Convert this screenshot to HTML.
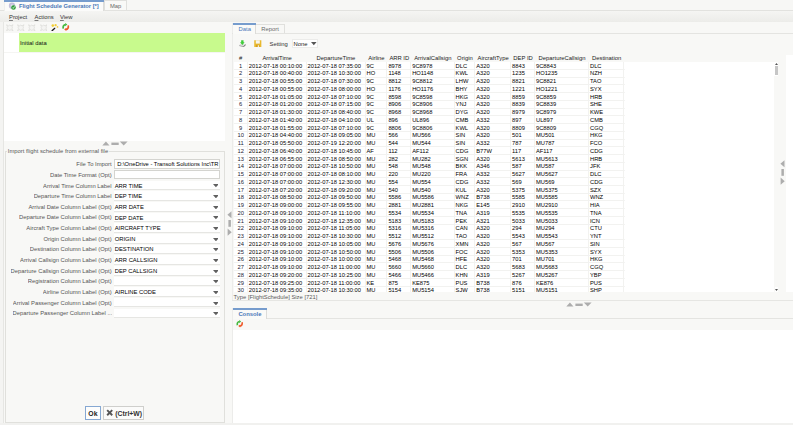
<!DOCTYPE html>
<html><head><meta charset="utf-8"><title>Flight Schedule Generator</title><style>
html,body{margin:0;padding:0}
body{width:793px;height:425px;overflow:hidden;background:#f8f8f6;font-family:"Liberation Sans",Arial,sans-serif;font-size:5.85px;color:#222;position:relative}
div,span{box-sizing:border-box}
.a{position:absolute}
.t{position:absolute;white-space:nowrap;line-height:8px;height:8px}
.b{font-weight:bold}
.blue{color:#4a78b8}
.gray{color:#5a5a5a}
.hl{position:absolute;height:1px;background:#e2e2df}
.vl{position:absolute;width:1px;background:#e2e2df}
.tri{position:absolute;width:0;height:0}
.lab{position:absolute;right:681.4px;white-space:nowrap;line-height:8px;height:8px;color:#555;text-align:right;overflow:hidden;text-overflow:ellipsis;max-width:106px}
.inp{position:absolute;left:114.3px;width:105.5px;background:#fff;border:1px solid #d4d4d0;overflow:hidden}
.cmb{position:absolute;left:114.3px;width:105.5px;height:9.5px;background:#fff;border-bottom:1px solid #e6e6e3;overflow:hidden}
.cmb span{position:absolute;left:0.4px;top:0.8px;line-height:8px;white-space:nowrap;color:#000}
.cmb svg{position:absolute;left:98.3px;top:3.7px}
#tbl{position:absolute;left:233.5px;top:61.7px;width:540.5px;height:230.3px;background:#fff repeating-linear-gradient(to bottom,transparent 0,transparent 6.75px,#f2f2f0 6.75px,#f2f2f0 7.75px) no-repeat;background-size:390.8px 100%;overflow:hidden}
.gv{position:absolute;top:0;width:1px;height:100%;background:#f2f2f0}
.r{position:absolute;left:0;height:7.75px;white-space:nowrap}
.c{position:absolute;top:0;height:7.75px;line-height:9.2px;padding-left:1px;font-size:5.76px;overflow:hidden;color:#000}

.c0{text-align:center;padding-left:0;color:#223}
.h{position:absolute;top:54.3px;height:8px;line-height:8px;text-align:center;color:#222;white-space:nowrap}
u{text-decoration:underline;text-decoration-thickness:0.55px;text-underline-offset:0.9px;text-decoration-color:#7a7a7a}
</style></head><body>
<div class="a" style="left:0;top:0;width:793px;height:10.6px;background:#f7f7f5"></div>
<div class="hl" style="left:0;top:10.2px;width:793px;background:#e2e2df"></div>
<div class="a" style="left:3.5px;top:0;width:100.8px;height:11.2px;background:#fbfbfa;border-left:1px solid #efefec;border-right:1px solid #dcdcd9"></div>
<div class="a" style="left:3.5px;top:0;width:100.8px;height:1.6px;background:#769ccd"></div>
<svg class="a" style="left:8.3px;top:1.5px" width="8.5" height="8.5" viewBox="0 0 17 17"><circle cx="8" cy="7.500" r="6.300" fill="#c4c0da"/><circle cx="8" cy="7.500" r="2.400" fill="#e9e7f2"/><circle cx="11" cy="11" r="4.6" fill="#2f9e3a"/><path d="M8.800 11.200l1.600 1.600 3-4" stroke="#fff" stroke-width="1.500" fill="none"/></svg>
<div class="t b blue" style="left:19px;top:2px;font-size:5.78px">Flight Schedule Generator [*]</div>
<div class="a" style="left:104.4px;top:0;width:22.2px;height:10.4px;background:#f9f9f7;border:1px solid #e0e0dd;border-bottom:none"></div>
<div class="t" style="left:110px;top:2px;color:#6a6a6a">Map</div>
<div class="a" style="left:0;top:11.2px;width:793px;height:11px;background:linear-gradient(#f5f5f3,#ecece9)"></div>
<div class="t" style="left:9px;top:13.3px;color:#333"><u>P</u>roject</div>
<div class="t" style="left:34.5px;top:13.3px;color:#333"><u>A</u>ctions</div>
<div class="t" style="left:60px;top:13.3px;color:#333"><u>V</u>iew</div>
<svg class="a" style="left:6px;top:23.6px" width="7.5" height="7.5" viewBox="0 0 15 15"><path d="M1 1.500L5 3.600 7.500 2.200 10 3.600 14 1.500 12 5.600 13 7.500 12 9.400 14 13.500 10 11.400 7.500 12.800 5 11.400 1 13.500 3 9.400 2 7.500 3 5.600z" fill="#f4f4f2" stroke="#d9d9d6" stroke-width="1.300"/></svg>
<svg class="a" style="left:17px;top:23.6px" width="7.5" height="7.5" viewBox="0 0 15 15"><path d="M1 1.500L5 3.600 7.500 2.200 10 3.600 14 1.500 12 5.600 13 7.500 12 9.400 14 13.500 10 11.400 7.500 12.800 5 11.400 1 13.500 3 9.400 2 7.500 3 5.600z" fill="#f4f4f2" stroke="#d9d9d6" stroke-width="1.300"/></svg>
<svg class="a" style="left:28px;top:23.6px" width="7.5" height="7.5" viewBox="0 0 15 15"><path d="M1 1.500L5 3.600 7.500 2.200 10 3.600 14 1.500 12 5.600 13 7.500 12 9.400 14 13.500 10 11.400 7.500 12.800 5 11.400 1 13.500 3 9.400 2 7.500 3 5.600z" fill="#f4f4f2" stroke="#d9d9d6" stroke-width="1.300"/></svg>
<svg class="a" style="left:39.5px;top:23.6px" width="7.5" height="7.5" viewBox="0 0 15 15"><path d="M1 1.500L5 3.600 7.500 2.200 10 3.600 14 1.500 12 5.600 13 7.500 12 9.400 14 13.500 10 11.400 7.500 12.800 5 11.400 1 13.500 3 9.400 2 7.500 3 5.600z" fill="#f4f4f2" stroke="#d9d9d6" stroke-width="1.300"/></svg>
<svg class="a" style="left:51px;top:23.6px" width="7.5" height="7.5" viewBox="0 0 15 15"><path d="M0.600 13.200L7.200 7l1.800 1.900L2.400 15z" fill="#1a1a1a"/><path d="M7.200 7l1.800-1.600 1.700 1.800L9 8.900z" fill="#e8e8f0"/><circle cx="3.600" cy="3.200" r="2.600" fill="#f3cf3a"/><circle cx="9.200" cy="2.400" r="2.300" fill="#f3cf3a"/><circle cx="13" cy="5.800" r="1.700" fill="#f0c94a"/></svg>
<svg class="a" style="left:62px;top:23.4px" width="7.5" height="8" viewBox="0 0 15 16"><path d="M2.600 11.200C1.400 6.500 3.600 3.200 7.200 3.100" stroke="#45b83f" stroke-width="3.400" fill="none"/><path d="M6.400 0v6.600L10.600 3.200z" fill="#45b83f"/><path d="M12.400 4.800c1.200 4.700-1 8-4.600 8.100" stroke="#ee5a2a" stroke-width="3.400" fill="none"/><path d="M8.600 16V9.400L4.400 12.800z" fill="#ee5a2a"/></svg>
<div class="vl" style="left:3px;top:22.4px;height:402.6px;width:0.8px;background:#e6e6e3"></div>
<div class="a" style="left:0;top:22.4px;width:3px;height:402.6px;background:#f4f4f2"></div>
<div class="a" style="left:3.8px;top:33px;width:221.6px;height:107.6px;background:#fff"></div>
<div class="a" style="left:19px;top:33px;width:206.4px;height:19px;background:#c8fa8d"></div>
<div class="hl" style="left:3.8px;top:52px;width:221.6px;background:#f5f5f3"></div>
<div class="t" style="left:20px;top:38.6px;color:#111">Initial data</div>
<svg class="a" style="left:101.50px;top:141.30px" width="26" height="5" viewBox="0 0 26 5"><path d="M0.300 4.600h7.200L3.900 0.400z" fill="#adadad"/><path d="M9.400 1.600h7.300v2.400H9.400z" fill="#adadad"/><path d="M17.800 0.400h7.800L21.700 4.600z" fill="#adadad"/></svg>
<div class="a" style="left:5.4px;top:151.2px;width:219.6px;height:271.6px;border:1px solid #e0e0dc"></div>
<div class="t gray" style="left:7px;top:147.4px;background:#f8f8f6;padding:0 0.8px">Import flight schedule from external file</div>
<div class="lab" style="top:160px">File To Import</div>
<div class="inp" style="top:159.3px;height:9.4px"><span class="t" style="left:1.9px;top:0px;color:#000;font-size:5.76px">D:\OneDrive - Transoft Solutions Inc\TR</span></div>
<div class="lab" style="top:170.5px">Date Time Format (Opt)</div>
<div class="inp" style="top:170px;height:8.9px"></div>
<div class="lab" style="top:181.50px">Arrival Time Column Label</div>
<div class="cmb" style="top:180.80px"><span>ARR TIME</span><svg width="5.8" height="3.3" viewBox="0 0 58 33"><path d="M0 0h58L29 33z" fill="#606060"/></svg></div>
<div class="lab" style="top:192.15px">Departure Time Column Label</div>
<div class="cmb" style="top:191.45px"><span>DEP TIME</span><svg width="5.8" height="3.3" viewBox="0 0 58 33"><path d="M0 0h58L29 33z" fill="#606060"/></svg></div>
<div class="lab" style="top:202.80px">Arrival Date Column Label (Opt)</div>
<div class="cmb" style="top:202.10px"><span>ARR DATE</span><svg width="5.8" height="3.3" viewBox="0 0 58 33"><path d="M0 0h58L29 33z" fill="#606060"/></svg></div>
<div class="lab" style="top:213.45px">Departure Date Column Label (Opt)</div>
<div class="cmb" style="top:212.75px"><span>DEP DATE</span><svg width="5.8" height="3.3" viewBox="0 0 58 33"><path d="M0 0h58L29 33z" fill="#606060"/></svg></div>
<div class="lab" style="top:224.10px">Aircraft Type Column Label (Opt)</div>
<div class="cmb" style="top:223.40px"><span>AIRCRAFT TYPE</span><svg width="5.8" height="3.3" viewBox="0 0 58 33"><path d="M0 0h58L29 33z" fill="#606060"/></svg></div>
<div class="lab" style="top:234.75px">Origin Column Label (Opt)</div>
<div class="cmb" style="top:234.05px"><span>ORIGIN</span><svg width="5.8" height="3.3" viewBox="0 0 58 33"><path d="M0 0h58L29 33z" fill="#606060"/></svg></div>
<div class="lab" style="top:245.40px">Destination Column Label (Opt)</div>
<div class="cmb" style="top:244.70px"><span>DESTINATION</span><svg width="5.8" height="3.3" viewBox="0 0 58 33"><path d="M0 0h58L29 33z" fill="#606060"/></svg></div>
<div class="lab" style="top:256.05px">Arrival Callsign Column Label (Opt)</div>
<div class="cmb" style="top:255.35px"><span>ARR CALLSIGN</span><svg width="5.8" height="3.3" viewBox="0 0 58 33"><path d="M0 0h58L29 33z" fill="#606060"/></svg></div>
<div class="lab" style="top:266.70px">Departure Callsign Column Label (Opt)</div>
<div class="cmb" style="top:266.00px"><span>DEP CALLSIGN</span><svg width="5.8" height="3.3" viewBox="0 0 58 33"><path d="M0 0h58L29 33z" fill="#606060"/></svg></div>
<div class="lab" style="top:277.35px">Registration Column Label (Opt)</div>
<div class="cmb" style="top:276.65px"><span></span><svg width="5.8" height="3.3" viewBox="0 0 58 33"><path d="M0 0h58L29 33z" fill="#606060"/></svg></div>
<div class="lab" style="top:288.00px">Airline Column Label (Opt)</div>
<div class="cmb" style="top:287.30px"><span>AIRLINE CODE</span><svg width="5.8" height="3.3" viewBox="0 0 58 33"><path d="M0 0h58L29 33z" fill="#606060"/></svg></div>
<div class="lab" style="top:298.65px">Arrival Passenger Column Label (Opt)</div>
<div class="cmb" style="top:297.95px"><span></span><svg width="5.8" height="3.3" viewBox="0 0 58 33"><path d="M0 0h58L29 33z" fill="#606060"/></svg></div>
<div class="lab" style="top:309.30px;right:auto;left:12.6px;text-align:left">Departure Passenger Column Label ...</div>
<div class="cmb" style="top:308.60px"><span></span><svg width="5.8" height="3.3" viewBox="0 0 58 33"><path d="M0 0h58L29 33z" fill="#606060"/></svg></div>
<div class="a b" style="left:85px;top:405.8px;width:15.8px;height:14px;border:1px solid #86a8d2;background:#fdfdfc;font-size:6.85px;line-height:14px;text-align:center;color:#222">Ok</div>
<div class="a b" style="left:103.1px;top:405.8px;width:41.4px;height:14px;border:1px solid #cfcfcc;background:#fbfbfa;font-size:6.85px;line-height:14px;color:#333"><svg class="a" style="left:1.6px;top:2.2px" width="7.4" height="7.4" viewBox="0 0 14 14"><path d="M2.200 2.200l9.600 9.600M11.800 2.200L2.200 11.800" stroke="#555" stroke-width="3.600"/></svg><span class="a" style="left:11.2px;top:0">(Ctrl+W)</span></div>
<svg class="a" style="left:226.60px;top:210.90px" width="5" height="25" viewBox="0 0 5 25"><path d="M4.500 0.300v6.900L0.400 3.750z" fill="#adadad"/><path d="M1.400 9h2.500v6.800H1.400z" fill="#adadad"/><path d="M0.600 17.600v7.100L4.700 21.150z" fill="#adadad"/></svg>
<div class="vl" style="left:232.4px;top:23px;height:277.5px;background:#ececea"></div>
<div class="hl" style="left:232.4px;top:32.5px;width:561px;background:#e4e4e1"></div>
<div class="a" style="left:232.8px;top:23px;width:23.2px;height:10.6px;background:#fafaf8;border-right:1px solid #dcdcd9"></div>
<div class="a" style="left:232.8px;top:23px;width:23.2px;height:1.7px;background:#769ccd"></div>
<div class="t blue" style="left:238.6px;top:25px">Data</div>
<div class="a" style="left:256px;top:24px;width:28.6px;height:8.6px;border:1px solid #e0e0dd;border-left:none;border-bottom:none"></div>
<div class="t" style="left:261.3px;top:25px;color:#6a6a6a">Report</div>
<svg class="a" style="left:238.8px;top:39.6px" width="7" height="7.4" viewBox="0 0 14 15"><path d="M0.400 10L4.800 6.200l8.800 2.200L9 12.600z" fill="#dcdcdc"/><path d="M0.400 10L9 12.600v2.200L0.400 12z" fill="#a8a8a8"/><path d="M9 12.600l4.600-4.200v2L9 14.800z" fill="#4a4a4a"/><path d="M4.300 0.300h4.800v4.400h2.200L6.700 10.200 2 4.700h2.300z" fill="#3fcc3a"/></svg>
<svg class="a" style="left:254px;top:39.6px" width="7.6" height="7.6" viewBox="0 0 15 15"><path d="M0.500 0.500h14v14h-14z" fill="#e9b92e"/><path d="M3.500 0.500h8v6.600h-8z" fill="#f7f5ee"/><path d="M4 9.500h7v5H4z" fill="#d49f1e"/><path d="M7.500 10.500h2.200v4H7.500z" fill="#f7f5ee"/></svg>
<div class="t" style="left:269.6px;top:40px;color:#333">Setting</div>
<div class="a" style="left:292px;top:39px;width:26.4px;height:9.3px;background:#fff;border:1px solid #ececea"></div>
<div class="t" style="left:293.6px;top:40px;color:#222">None</div>
<svg class="a" style="left:311.2px;top:42.4px" width="5.6" height="3.2" viewBox="0 0 56 32"><path d="M0 0h56L28 32z" fill="#555"/></svg>
<div class="h" style="left:233.5px;width:14.3px">#</div>
<div class="h" style="left:247.8px;width:58.7px">ArrivalTime</div>
<div class="h" style="left:306.5px;width:59.0px">DepartureTime</div>
<div class="h" style="left:365.5px;width:21.9px">Airline</div>
<div class="h" style="left:387.4px;width:23.8px">ARR ID</div>
<div class="h" style="left:411.2px;width:43.4px">ArrivalCallsign</div>
<div class="h" style="left:454.6px;width:20.6px">Origin</div>
<div class="h" style="left:475.2px;width:35.9px">AircraftType</div>
<div class="h" style="left:511.1px;width:23.9px">DEP ID</div>
<div class="h" style="left:535.0px;width:54.0px">DepartureCallsign</div>
<div class="h" style="left:589.0px;width:35.3px">Destination</div>
<div id="tbl">
<div class="gv" style="left:13.3px"></div>
<div class="gv" style="left:72.0px"></div>
<div class="gv" style="left:131.0px"></div>
<div class="gv" style="left:152.9px"></div>
<div class="gv" style="left:176.7px"></div>
<div class="gv" style="left:220.1px"></div>
<div class="gv" style="left:240.7px"></div>
<div class="gv" style="left:276.6px"></div>
<div class="gv" style="left:300.5px"></div>
<div class="gv" style="left:354.5px"></div>
<div class="gv" style="left:389.8px"></div>
<div class="r" style="top:0.00px"><div class="c c0" style="left:0.0px;width:14.3px">1</div><div class="c" style="left:14.3px;width:58.7px">2012-07-18 00:10:00</div><div class="c" style="left:73.0px;width:59.0px">2012-07-18 07:35:00</div><div class="c" style="left:132.0px;width:21.9px">9C</div><div class="c" style="left:153.9px;width:23.8px">8978</div><div class="c" style="left:177.7px;width:43.4px">9C8978</div><div class="c" style="left:221.1px;width:20.6px">DLC</div><div class="c" style="left:241.7px;width:35.9px">A320</div><div class="c" style="left:277.6px;width:23.9px">8843</div><div class="c" style="left:301.5px;width:54.0px">9C8843</div><div class="c" style="left:355.5px;width:35.3px">DLC</div></div>
<div class="r" style="top:7.75px"><div class="c c0" style="left:0.0px;width:14.3px">2</div><div class="c" style="left:14.3px;width:58.7px">2012-07-18 00:40:00</div><div class="c" style="left:73.0px;width:59.0px">2012-07-18 10:30:00</div><div class="c" style="left:132.0px;width:21.9px">HO</div><div class="c" style="left:153.9px;width:23.8px">1148</div><div class="c" style="left:177.7px;width:43.4px">HO1148</div><div class="c" style="left:221.1px;width:20.6px">KWL</div><div class="c" style="left:241.7px;width:35.9px">A320</div><div class="c" style="left:277.6px;width:23.9px">1235</div><div class="c" style="left:301.5px;width:54.0px">HO1235</div><div class="c" style="left:355.5px;width:35.3px">NZH</div></div>
<div class="r" style="top:15.50px"><div class="c c0" style="left:0.0px;width:14.3px">3</div><div class="c" style="left:14.3px;width:58.7px">2012-07-18 00:55:00</div><div class="c" style="left:73.0px;width:59.0px">2012-07-18 07:30:00</div><div class="c" style="left:132.0px;width:21.9px">9C</div><div class="c" style="left:153.9px;width:23.8px">8812</div><div class="c" style="left:177.7px;width:43.4px">9C8812</div><div class="c" style="left:221.1px;width:20.6px">LHW</div><div class="c" style="left:241.7px;width:35.9px">A320</div><div class="c" style="left:277.6px;width:23.9px">8821</div><div class="c" style="left:301.5px;width:54.0px">9C8821</div><div class="c" style="left:355.5px;width:35.3px">TAO</div></div>
<div class="r" style="top:23.25px"><div class="c c0" style="left:0.0px;width:14.3px">4</div><div class="c" style="left:14.3px;width:58.7px">2012-07-18 00:55:00</div><div class="c" style="left:73.0px;width:59.0px">2012-07-18 08:00:00</div><div class="c" style="left:132.0px;width:21.9px">HO</div><div class="c" style="left:153.9px;width:23.8px">1176</div><div class="c" style="left:177.7px;width:43.4px">HO1176</div><div class="c" style="left:221.1px;width:20.6px">BHY</div><div class="c" style="left:241.7px;width:35.9px">A320</div><div class="c" style="left:277.6px;width:23.9px">1221</div><div class="c" style="left:301.5px;width:54.0px">HO1221</div><div class="c" style="left:355.5px;width:35.3px">SYX</div></div>
<div class="r" style="top:31.00px"><div class="c c0" style="left:0.0px;width:14.3px">5</div><div class="c" style="left:14.3px;width:58.7px">2012-07-18 01:05:00</div><div class="c" style="left:73.0px;width:59.0px">2012-07-18 07:10:00</div><div class="c" style="left:132.0px;width:21.9px">9C</div><div class="c" style="left:153.9px;width:23.8px">8598</div><div class="c" style="left:177.7px;width:43.4px">9C8598</div><div class="c" style="left:221.1px;width:20.6px">HKG</div><div class="c" style="left:241.7px;width:35.9px">A320</div><div class="c" style="left:277.6px;width:23.9px">8859</div><div class="c" style="left:301.5px;width:54.0px">9C8859</div><div class="c" style="left:355.5px;width:35.3px">HRB</div></div>
<div class="r" style="top:38.75px"><div class="c c0" style="left:0.0px;width:14.3px">6</div><div class="c" style="left:14.3px;width:58.7px">2012-07-18 01:20:00</div><div class="c" style="left:73.0px;width:59.0px">2012-07-18 07:15:00</div><div class="c" style="left:132.0px;width:21.9px">9C</div><div class="c" style="left:153.9px;width:23.8px">8906</div><div class="c" style="left:177.7px;width:43.4px">9C8906</div><div class="c" style="left:221.1px;width:20.6px">YNJ</div><div class="c" style="left:241.7px;width:35.9px">A320</div><div class="c" style="left:277.6px;width:23.9px">8839</div><div class="c" style="left:301.5px;width:54.0px">9C8839</div><div class="c" style="left:355.5px;width:35.3px">SHE</div></div>
<div class="r" style="top:46.50px"><div class="c c0" style="left:0.0px;width:14.3px">7</div><div class="c" style="left:14.3px;width:58.7px">2012-07-18 01:30:00</div><div class="c" style="left:73.0px;width:59.0px">2012-07-18 08:40:00</div><div class="c" style="left:132.0px;width:21.9px">9C</div><div class="c" style="left:153.9px;width:23.8px">8968</div><div class="c" style="left:177.7px;width:43.4px">9C8968</div><div class="c" style="left:221.1px;width:20.6px">DYG</div><div class="c" style="left:241.7px;width:35.9px">A320</div><div class="c" style="left:277.6px;width:23.9px">8979</div><div class="c" style="left:301.5px;width:54.0px">9C8979</div><div class="c" style="left:355.5px;width:35.3px">KWE</div></div>
<div class="r" style="top:54.25px"><div class="c c0" style="left:0.0px;width:14.3px">8</div><div class="c" style="left:14.3px;width:58.7px">2012-07-18 01:40:00</div><div class="c" style="left:73.0px;width:59.0px">2012-07-18 04:10:00</div><div class="c" style="left:132.0px;width:21.9px">UL</div><div class="c" style="left:153.9px;width:23.8px">896</div><div class="c" style="left:177.7px;width:43.4px">UL896</div><div class="c" style="left:221.1px;width:20.6px">CMB</div><div class="c" style="left:241.7px;width:35.9px">A332</div><div class="c" style="left:277.6px;width:23.9px">897</div><div class="c" style="left:301.5px;width:54.0px">UL897</div><div class="c" style="left:355.5px;width:35.3px">CMB</div></div>
<div class="r" style="top:62.00px"><div class="c c0" style="left:0.0px;width:14.3px">9</div><div class="c" style="left:14.3px;width:58.7px">2012-07-18 01:55:00</div><div class="c" style="left:73.0px;width:59.0px">2012-07-18 07:10:00</div><div class="c" style="left:132.0px;width:21.9px">9C</div><div class="c" style="left:153.9px;width:23.8px">8806</div><div class="c" style="left:177.7px;width:43.4px">9C8806</div><div class="c" style="left:221.1px;width:20.6px">KWL</div><div class="c" style="left:241.7px;width:35.9px">A320</div><div class="c" style="left:277.6px;width:23.9px">8809</div><div class="c" style="left:301.5px;width:54.0px">9C8809</div><div class="c" style="left:355.5px;width:35.3px">CGQ</div></div>
<div class="r" style="top:69.75px"><div class="c c0" style="left:0.0px;width:14.3px">10</div><div class="c" style="left:14.3px;width:58.7px">2012-07-18 04:40:00</div><div class="c" style="left:73.0px;width:59.0px">2012-07-18 09:05:00</div><div class="c" style="left:132.0px;width:21.9px">MU</div><div class="c" style="left:153.9px;width:23.8px">566</div><div class="c" style="left:177.7px;width:43.4px">MU566</div><div class="c" style="left:221.1px;width:20.6px">SIN</div><div class="c" style="left:241.7px;width:35.9px">A320</div><div class="c" style="left:277.6px;width:23.9px">501</div><div class="c" style="left:301.5px;width:54.0px">MU501</div><div class="c" style="left:355.5px;width:35.3px">HKG</div></div>
<div class="r" style="top:77.50px"><div class="c c0" style="left:0.0px;width:14.3px">11</div><div class="c" style="left:14.3px;width:58.7px">2012-07-18 05:50:00</div><div class="c" style="left:73.0px;width:59.0px">2012-07-19 12:20:00</div><div class="c" style="left:132.0px;width:21.9px">MU</div><div class="c" style="left:153.9px;width:23.8px">544</div><div class="c" style="left:177.7px;width:43.4px">MU544</div><div class="c" style="left:221.1px;width:20.6px">SIN</div><div class="c" style="left:241.7px;width:35.9px">A332</div><div class="c" style="left:277.6px;width:23.9px">787</div><div class="c" style="left:301.5px;width:54.0px">MU787</div><div class="c" style="left:355.5px;width:35.3px">FCO</div></div>
<div class="r" style="top:85.25px"><div class="c c0" style="left:0.0px;width:14.3px">12</div><div class="c" style="left:14.3px;width:58.7px">2012-07-18 06:40:00</div><div class="c" style="left:73.0px;width:59.0px">2012-07-18 10:45:00</div><div class="c" style="left:132.0px;width:21.9px">AF</div><div class="c" style="left:153.9px;width:23.8px">112</div><div class="c" style="left:177.7px;width:43.4px">AF112</div><div class="c" style="left:221.1px;width:20.6px">CDG</div><div class="c" style="left:241.7px;width:35.9px">B77W</div><div class="c" style="left:277.6px;width:23.9px">117</div><div class="c" style="left:301.5px;width:54.0px">AF117</div><div class="c" style="left:355.5px;width:35.3px">CDG</div></div>
<div class="r" style="top:93.00px"><div class="c c0" style="left:0.0px;width:14.3px">13</div><div class="c" style="left:14.3px;width:58.7px">2012-07-18 06:55:00</div><div class="c" style="left:73.0px;width:59.0px">2012-07-18 08:50:00</div><div class="c" style="left:132.0px;width:21.9px">MU</div><div class="c" style="left:153.9px;width:23.8px">282</div><div class="c" style="left:177.7px;width:43.4px">MU282</div><div class="c" style="left:221.1px;width:20.6px">SGN</div><div class="c" style="left:241.7px;width:35.9px">A320</div><div class="c" style="left:277.6px;width:23.9px">5613</div><div class="c" style="left:301.5px;width:54.0px">MU5613</div><div class="c" style="left:355.5px;width:35.3px">HRB</div></div>
<div class="r" style="top:100.75px"><div class="c c0" style="left:0.0px;width:14.3px">14</div><div class="c" style="left:14.3px;width:58.7px">2012-07-18 07:00:00</div><div class="c" style="left:73.0px;width:59.0px">2012-07-18 10:50:00</div><div class="c" style="left:132.0px;width:21.9px">MU</div><div class="c" style="left:153.9px;width:23.8px">548</div><div class="c" style="left:177.7px;width:43.4px">MU548</div><div class="c" style="left:221.1px;width:20.6px">BKK</div><div class="c" style="left:241.7px;width:35.9px">A346</div><div class="c" style="left:277.6px;width:23.9px">587</div><div class="c" style="left:301.5px;width:54.0px">MU587</div><div class="c" style="left:355.5px;width:35.3px">JFK</div></div>
<div class="r" style="top:108.50px"><div class="c c0" style="left:0.0px;width:14.3px">15</div><div class="c" style="left:14.3px;width:58.7px">2012-07-18 07:00:00</div><div class="c" style="left:73.0px;width:59.0px">2012-07-18 08:10:00</div><div class="c" style="left:132.0px;width:21.9px">MU</div><div class="c" style="left:153.9px;width:23.8px">220</div><div class="c" style="left:177.7px;width:43.4px">MU220</div><div class="c" style="left:221.1px;width:20.6px">FRA</div><div class="c" style="left:241.7px;width:35.9px">A332</div><div class="c" style="left:277.6px;width:23.9px">5627</div><div class="c" style="left:301.5px;width:54.0px">MU5627</div><div class="c" style="left:355.5px;width:35.3px">DLC</div></div>
<div class="r" style="top:116.25px"><div class="c c0" style="left:0.0px;width:14.3px">16</div><div class="c" style="left:14.3px;width:58.7px">2012-07-18 07:00:00</div><div class="c" style="left:73.0px;width:59.0px">2012-07-18 12:30:00</div><div class="c" style="left:132.0px;width:21.9px">MU</div><div class="c" style="left:153.9px;width:23.8px">554</div><div class="c" style="left:177.7px;width:43.4px">MU554</div><div class="c" style="left:221.1px;width:20.6px">CDG</div><div class="c" style="left:241.7px;width:35.9px">A332</div><div class="c" style="left:277.6px;width:23.9px">569</div><div class="c" style="left:301.5px;width:54.0px">MU569</div><div class="c" style="left:355.5px;width:35.3px">CDG</div></div>
<div class="r" style="top:124.00px"><div class="c c0" style="left:0.0px;width:14.3px">17</div><div class="c" style="left:14.3px;width:58.7px">2012-07-18 07:20:00</div><div class="c" style="left:73.0px;width:59.0px">2012-07-18 09:20:00</div><div class="c" style="left:132.0px;width:21.9px">MU</div><div class="c" style="left:153.9px;width:23.8px">540</div><div class="c" style="left:177.7px;width:43.4px">MU540</div><div class="c" style="left:221.1px;width:20.6px">KUL</div><div class="c" style="left:241.7px;width:35.9px">A320</div><div class="c" style="left:277.6px;width:23.9px">5375</div><div class="c" style="left:301.5px;width:54.0px">MU5375</div><div class="c" style="left:355.5px;width:35.3px">SZX</div></div>
<div class="r" style="top:131.75px"><div class="c c0" style="left:0.0px;width:14.3px">18</div><div class="c" style="left:14.3px;width:58.7px">2012-07-18 08:50:00</div><div class="c" style="left:73.0px;width:59.0px">2012-07-18 09:50:00</div><div class="c" style="left:132.0px;width:21.9px">MU</div><div class="c" style="left:153.9px;width:23.8px">5586</div><div class="c" style="left:177.7px;width:43.4px">MU5586</div><div class="c" style="left:221.1px;width:20.6px">WNZ</div><div class="c" style="left:241.7px;width:35.9px">B738</div><div class="c" style="left:277.6px;width:23.9px">5585</div><div class="c" style="left:301.5px;width:54.0px">MU5585</div><div class="c" style="left:355.5px;width:35.3px">WNZ</div></div>
<div class="r" style="top:139.50px"><div class="c c0" style="left:0.0px;width:14.3px">19</div><div class="c" style="left:14.3px;width:58.7px">2012-07-18 09:00:00</div><div class="c" style="left:73.0px;width:59.0px">2012-07-18 09:55:00</div><div class="c" style="left:132.0px;width:21.9px">MU</div><div class="c" style="left:153.9px;width:23.8px">2881</div><div class="c" style="left:177.7px;width:43.4px">MU2881</div><div class="c" style="left:221.1px;width:20.6px">NKG</div><div class="c" style="left:241.7px;width:35.9px">E145</div><div class="c" style="left:277.6px;width:23.9px">2910</div><div class="c" style="left:301.5px;width:54.0px">MU2910</div><div class="c" style="left:355.5px;width:35.3px">HIA</div></div>
<div class="r" style="top:147.25px"><div class="c c0" style="left:0.0px;width:14.3px">20</div><div class="c" style="left:14.3px;width:58.7px">2012-07-18 09:10:00</div><div class="c" style="left:73.0px;width:59.0px">2012-07-18 11:10:00</div><div class="c" style="left:132.0px;width:21.9px">MU</div><div class="c" style="left:153.9px;width:23.8px">5534</div><div class="c" style="left:177.7px;width:43.4px">MU5534</div><div class="c" style="left:221.1px;width:20.6px">TNA</div><div class="c" style="left:241.7px;width:35.9px">A319</div><div class="c" style="left:277.6px;width:23.9px">5535</div><div class="c" style="left:301.5px;width:54.0px">MU5535</div><div class="c" style="left:355.5px;width:35.3px">TNA</div></div>
<div class="r" style="top:155.00px"><div class="c c0" style="left:0.0px;width:14.3px">21</div><div class="c" style="left:14.3px;width:58.7px">2012-07-18 09:10:00</div><div class="c" style="left:73.0px;width:59.0px">2012-07-18 12:35:00</div><div class="c" style="left:132.0px;width:21.9px">MU</div><div class="c" style="left:153.9px;width:23.8px">5183</div><div class="c" style="left:177.7px;width:43.4px">MU5183</div><div class="c" style="left:221.1px;width:20.6px">PEK</div><div class="c" style="left:241.7px;width:35.9px">A321</div><div class="c" style="left:277.6px;width:23.9px">5033</div><div class="c" style="left:301.5px;width:54.0px">MU5033</div><div class="c" style="left:355.5px;width:35.3px">ICN</div></div>
<div class="r" style="top:162.75px"><div class="c c0" style="left:0.0px;width:14.3px">22</div><div class="c" style="left:14.3px;width:58.7px">2012-07-18 09:10:00</div><div class="c" style="left:73.0px;width:59.0px">2012-07-18 11:05:00</div><div class="c" style="left:132.0px;width:21.9px">MU</div><div class="c" style="left:153.9px;width:23.8px">5316</div><div class="c" style="left:177.7px;width:43.4px">MU5316</div><div class="c" style="left:221.1px;width:20.6px">CAN</div><div class="c" style="left:241.7px;width:35.9px">A320</div><div class="c" style="left:277.6px;width:23.9px">294</div><div class="c" style="left:301.5px;width:54.0px">MU294</div><div class="c" style="left:355.5px;width:35.3px">CTU</div></div>
<div class="r" style="top:170.50px"><div class="c c0" style="left:0.0px;width:14.3px">23</div><div class="c" style="left:14.3px;width:58.7px">2012-07-18 09:10:00</div><div class="c" style="left:73.0px;width:59.0px">2012-07-18 10:30:00</div><div class="c" style="left:132.0px;width:21.9px">MU</div><div class="c" style="left:153.9px;width:23.8px">5512</div><div class="c" style="left:177.7px;width:43.4px">MU5512</div><div class="c" style="left:221.1px;width:20.6px">TAO</div><div class="c" style="left:241.7px;width:35.9px">A320</div><div class="c" style="left:277.6px;width:23.9px">5543</div><div class="c" style="left:301.5px;width:54.0px">MU5543</div><div class="c" style="left:355.5px;width:35.3px">YNT</div></div>
<div class="r" style="top:178.25px"><div class="c c0" style="left:0.0px;width:14.3px">24</div><div class="c" style="left:14.3px;width:58.7px">2012-07-18 09:10:00</div><div class="c" style="left:73.0px;width:59.0px">2012-07-18 10:05:00</div><div class="c" style="left:132.0px;width:21.9px">MU</div><div class="c" style="left:153.9px;width:23.8px">5676</div><div class="c" style="left:177.7px;width:43.4px">MU5676</div><div class="c" style="left:221.1px;width:20.6px">XMN</div><div class="c" style="left:241.7px;width:35.9px">A320</div><div class="c" style="left:277.6px;width:23.9px">567</div><div class="c" style="left:301.5px;width:54.0px">MU567</div><div class="c" style="left:355.5px;width:35.3px">SIN</div></div>
<div class="r" style="top:186.00px"><div class="c c0" style="left:0.0px;width:14.3px">25</div><div class="c" style="left:14.3px;width:58.7px">2012-07-18 09:10:00</div><div class="c" style="left:73.0px;width:59.0px">2012-07-18 10:50:00</div><div class="c" style="left:132.0px;width:21.9px">MU</div><div class="c" style="left:153.9px;width:23.8px">5506</div><div class="c" style="left:177.7px;width:43.4px">MU5506</div><div class="c" style="left:221.1px;width:20.6px">FOC</div><div class="c" style="left:241.7px;width:35.9px">A320</div><div class="c" style="left:277.6px;width:23.9px">5353</div><div class="c" style="left:301.5px;width:54.0px">MU5353</div><div class="c" style="left:355.5px;width:35.3px">SYX</div></div>
<div class="r" style="top:193.75px"><div class="c c0" style="left:0.0px;width:14.3px">26</div><div class="c" style="left:14.3px;width:58.7px">2012-07-18 09:10:00</div><div class="c" style="left:73.0px;width:59.0px">2012-07-18 10:00:00</div><div class="c" style="left:132.0px;width:21.9px">MU</div><div class="c" style="left:153.9px;width:23.8px">5468</div><div class="c" style="left:177.7px;width:43.4px">MU5468</div><div class="c" style="left:221.1px;width:20.6px">HFE</div><div class="c" style="left:241.7px;width:35.9px">A320</div><div class="c" style="left:277.6px;width:23.9px">701</div><div class="c" style="left:301.5px;width:54.0px">MU701</div><div class="c" style="left:355.5px;width:35.3px">HKG</div></div>
<div class="r" style="top:201.50px"><div class="c c0" style="left:0.0px;width:14.3px">27</div><div class="c" style="left:14.3px;width:58.7px">2012-07-18 09:10:00</div><div class="c" style="left:73.0px;width:59.0px">2012-07-18 11:00:00</div><div class="c" style="left:132.0px;width:21.9px">MU</div><div class="c" style="left:153.9px;width:23.8px">5660</div><div class="c" style="left:177.7px;width:43.4px">MU5660</div><div class="c" style="left:221.1px;width:20.6px">DLC</div><div class="c" style="left:241.7px;width:35.9px">A320</div><div class="c" style="left:277.6px;width:23.9px">5683</div><div class="c" style="left:301.5px;width:54.0px">MU5683</div><div class="c" style="left:355.5px;width:35.3px">CGQ</div></div>
<div class="r" style="top:209.25px"><div class="c c0" style="left:0.0px;width:14.3px">28</div><div class="c" style="left:14.3px;width:58.7px">2012-07-18 09:20:00</div><div class="c" style="left:73.0px;width:59.0px">2012-07-18 10:25:00</div><div class="c" style="left:132.0px;width:21.9px">MU</div><div class="c" style="left:153.9px;width:23.8px">5466</div><div class="c" style="left:177.7px;width:43.4px">MU5466</div><div class="c" style="left:221.1px;width:20.6px">KHN</div><div class="c" style="left:241.7px;width:35.9px">A319</div><div class="c" style="left:277.6px;width:23.9px">5267</div><div class="c" style="left:301.5px;width:54.0px">MU5267</div><div class="c" style="left:355.5px;width:35.3px">YBP</div></div>
<div class="r" style="top:217.00px"><div class="c c0" style="left:0.0px;width:14.3px">29</div><div class="c" style="left:14.3px;width:58.7px">2012-07-18 09:25:00</div><div class="c" style="left:73.0px;width:59.0px">2012-07-18 11:00:00</div><div class="c" style="left:132.0px;width:21.9px">KE</div><div class="c" style="left:153.9px;width:23.8px">875</div><div class="c" style="left:177.7px;width:43.4px">KE875</div><div class="c" style="left:221.1px;width:20.6px">PUS</div><div class="c" style="left:241.7px;width:35.9px">B738</div><div class="c" style="left:277.6px;width:23.9px">876</div><div class="c" style="left:301.5px;width:54.0px">KE876</div><div class="c" style="left:355.5px;width:35.3px">PUS</div></div>
<div class="r" style="top:224.75px"><div class="c c0" style="left:0.0px;width:14.3px">30</div><div class="c" style="left:14.3px;width:58.7px">2012-07-18 09:35:00</div><div class="c" style="left:73.0px;width:59.0px">2012-07-18 10:30:00</div><div class="c" style="left:132.0px;width:21.9px">MU</div><div class="c" style="left:153.9px;width:23.8px">5154</div><div class="c" style="left:177.7px;width:43.4px">MU5154</div><div class="c" style="left:221.1px;width:20.6px">SJW</div><div class="c" style="left:241.7px;width:35.9px">B738</div><div class="c" style="left:277.6px;width:23.9px">5151</div><div class="c" style="left:301.5px;width:54.0px">MU5151</div><div class="c" style="left:355.5px;width:35.3px">SHP</div></div>
</div>
<div class="a" style="left:774px;top:61.7px;width:4.4px;height:14px;background:#fff"></div>
<svg class="a" style="left:774.8px;top:62.6px" width="3" height="2" viewBox="0 0 30 20"><path d="M0 20h30L15 0z" fill="#555"/></svg>
<div class="a" style="left:774.6px;top:66px;width:3.4px;height:9px;background:#c6c6c6"></div>
<div class="a" style="left:774.8px;top:286.6px;width:3.6px;height:5.4px;background:#fff"></div>
<svg class="a" style="left:774.8px;top:288.6px" width="3" height="2" viewBox="0 0 30 20"><path d="M0 0h30L15 20z" fill="#555"/></svg>
<div class="a" style="left:785.5px;top:55px;width:7.5px;height:237px;background:#fff"></div>
<svg class="a" style="left:779.50px;top:159.80px" width="5" height="25" viewBox="0 0 5 25"><path d="M4.500 0.300v6.900L0.400 3.750z" fill="#adadad"/><path d="M1.400 9h2.500v6.800H1.400z" fill="#adadad"/><path d="M0.600 17.600v7.100L4.700 21.150z" fill="#adadad"/></svg>
<div class="t gray" style="left:233.6px;top:292.8px">Type [FlightSchedule] Size [721]</div>
<div class="hl" style="left:232.4px;top:300px;width:561px;background:#e6e6e3"></div>
<svg class="a" style="left:566.40px;top:302.10px" width="26" height="5" viewBox="0 0 26 5"><path d="M0.300 4.600h7.200L3.900 0.400z" fill="#adadad"/><path d="M9.400 1.600h7.300v2.400H9.400z" fill="#adadad"/><path d="M17.800 0.400h7.800L21.700 4.600z" fill="#adadad"/></svg>
<div class="hl" style="left:232.4px;top:318px;width:561px;background:#e4e4e1"></div>
<div class="vl" style="left:232.4px;top:308.2px;height:117px;background:#ececea"></div>
<div class="a" style="left:232.8px;top:308.2px;width:33.8px;height:10.8px;background:#fafaf8;border-right:1px solid #dcdcd9"></div>
<div class="a" style="left:232.8px;top:308.2px;width:33.8px;height:1.8px;background:#769ccd"></div>
<div class="t b blue" style="left:238.4px;top:310.4px">Console</div>
<svg class="a" style="left:235.8px;top:320.2px" width="7.4" height="7.6" viewBox="0 0 15 16"><path d="M2.600 11.200C1.400 6.500 3.600 3.200 7.200 3.100" stroke="#45b83f" stroke-width="3.400" fill="none"/><path d="M6.400 0v6.600L10.600 3.200z" fill="#45b83f"/><path d="M12.400 4.800c1.200 4.700-1 8-4.600 8.100" stroke="#ee5a2a" stroke-width="3.400" fill="none"/><path d="M8.600 16V9.400L4.400 12.800z" fill="#ee5a2a"/></svg>
<div class="a" style="left:233.3px;top:329.8px;width:559.7px;height:93px;background:#fff"></div>
<div class="a" style="left:0;top:423px;width:793px;height:2px;background:#f1f1ef"></div>
</body></html>
